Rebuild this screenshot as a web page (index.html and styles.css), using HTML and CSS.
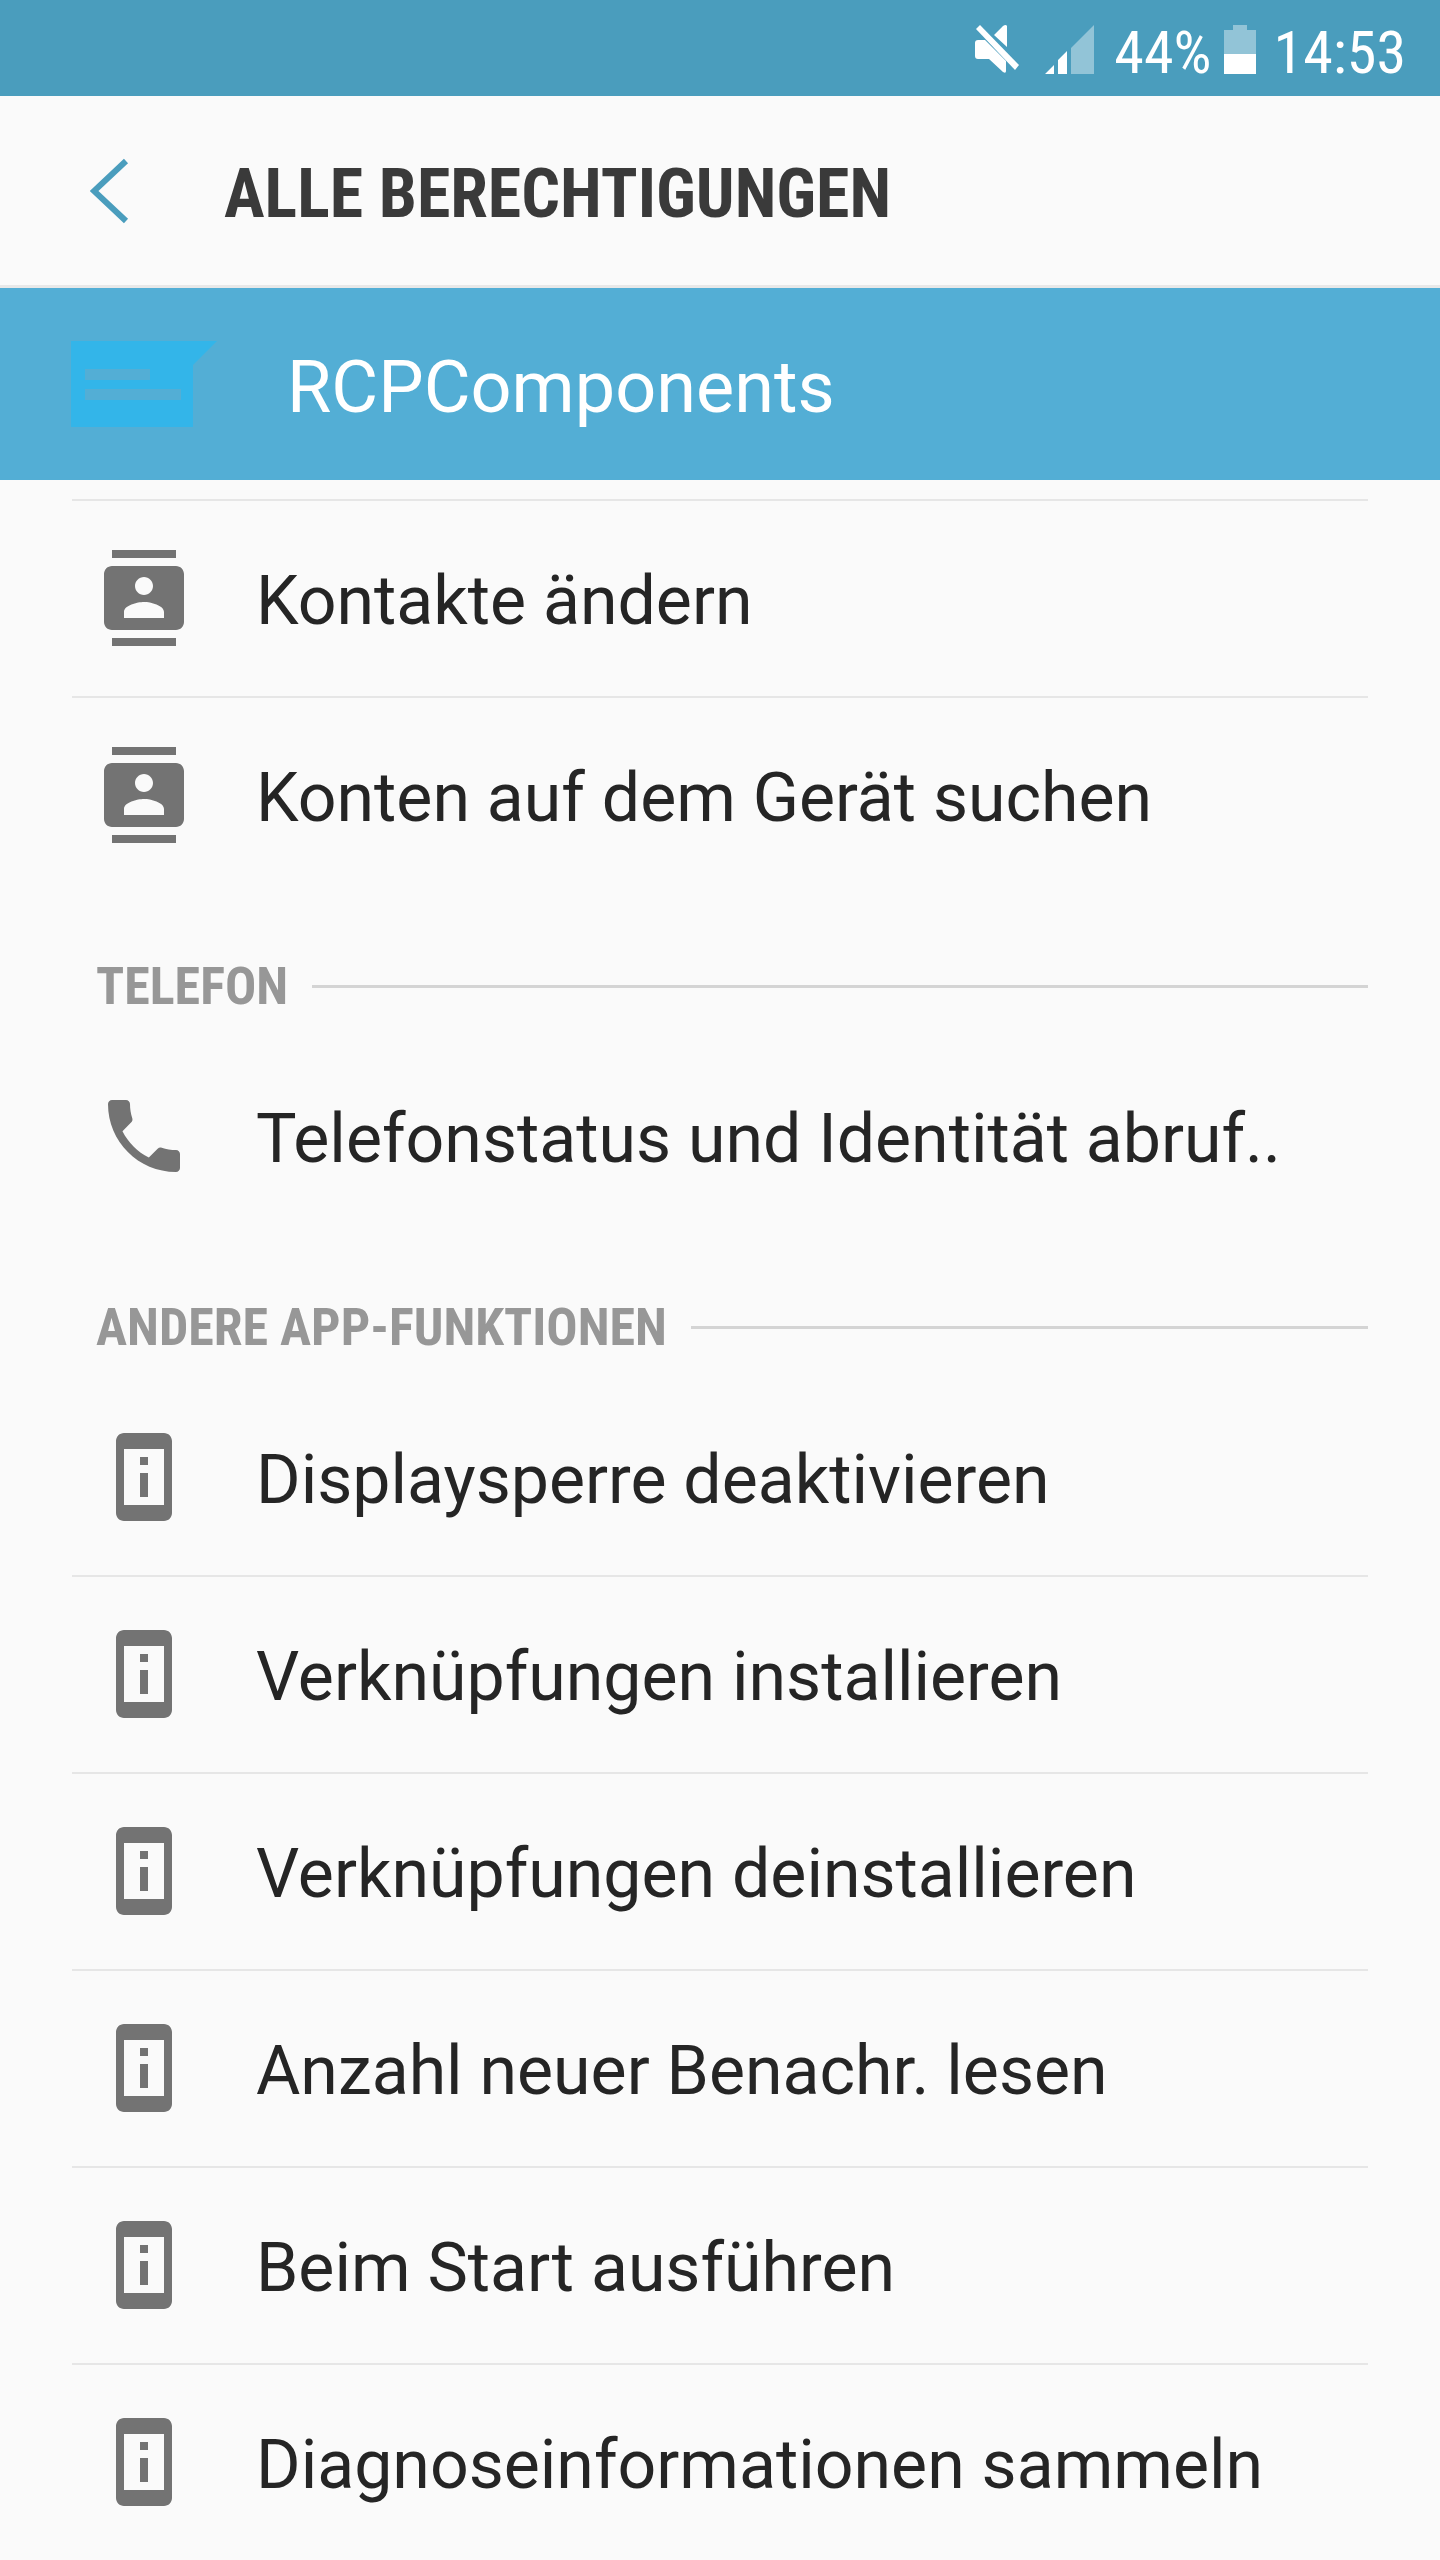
FILE: index.html
```html
<!DOCTYPE html>
<html lang="de">
<head>
  <meta charset="utf-8">
  <meta name="viewport" content="width=device-width">
  <title>Alle Berechtigungen</title>
  <link rel="stylesheet" href="styles.css">
</head>
<body>
  <!-- shared row icons -->
  <svg class="symbols" aria-hidden="true">
    <symbol id="contacts" viewBox="0 0 24 24">
      <path d="M20 0H4v2h16V0zM4 24h16v-2H4v2zM20 4H4c-1.100 0-2 .9-2 2v12c0 1.100.9 2 2 2h16c1.100 0 2-.9 2-2V6c0-1.100-.9-2-2-2zm-8 2.750c1.240 0 2.250 1.010 2.250 2.250s-1.010 2.250-2.250 2.250S9.750 10.240 9.750 9 10.760 6.750 12 6.750zM17 17H7v-1.500c0-1.670 3.330-2.500 5-2.500s5 .83 5 2.500V17z"/>
    </symbol>
    <symbol id="phone" viewBox="0 0 24 24">
      <path d="M6.620 10.790c1.440 2.830 3.760 5.140 6.590 6.590l2.200-2.200c.27-.27.67-.36 1.020-.24 1.120.37 2.330.57 3.570.57.55 0 1 .45 1 1V20c0 .55-.45 1-1 1-9.390 0-17-7.610-17-17 0-.55.45-1 1-1h3.500c.55 0 1 .45 1 1 0 1.250.2 2.450.57 3.570.11.35.03.74-.25 1.020l-2.200 2.200z"/>
    </symbol>
    <symbol id="device" viewBox="0 0 24 24">
      <path d="M13 7h-2v2h2V7zm0 4h-2v6h2v-6zm4-10H7c-1.100 0-2 .9-2 2v18c0 1.100.9 2 2 2h10c1.100 0 2-.9 2-2V3c0-1.100-.9-2-2-2zm0 18H7V5h10v14z"/>
    </symbol>
  </svg>

  <div class="statusbar">
    <svg class="mute" viewBox="0 0 46 50" aria-hidden="true">
      <path d="M1 19q0-3 3-3h7L32 37v10q0 3-3 1L15 35H4q-3 0-3-3zM20 11 29 2q3-2 4 0v21z"/>
      <path d="M2 5 6 1 45 41 41 46z"/>
    </svg>
    <svg class="signal" viewBox="0 0 49 49" aria-hidden="true">
      <path d="M0 49 9 40v9zM13 49V35l9-9v23z"/>
      <path class="dim" d="M26 49V23L49 0v49z"/>
    </svg>
    <span class="level">44%</span>
    <svg class="battery" viewBox="0 0 32 49" aria-hidden="true">
      <path class="dim" d="M9 0h14v5h9v24H0V5h9z"/>
      <path d="M0 29h32v20H0z"/>
    </svg>
    <span>14:53</span>
  </div>

  <header class="header">
    <button class="back" type="button" aria-label="Zurück">
      <svg viewBox="0 0 40 66" aria-hidden="true"><path d="M36 3 4 33 36 63"/></svg>
    </button>
    <h1>ALLE BERECHTIGUNGEN</h1>
  </header>

  <div class="app">
    <svg viewBox="0 0 146 86" aria-hidden="true">
      <path fill-rule="evenodd" d="M0 0h146l-24 24v62H0zM14 28v11h65V28zM14 48v11h96V48z"/>
    </svg>
    <span>RCPComponents</span>
  </div>

  <main class="content">
    <ul class="list first">
      <li><svg><use href="#contacts"/></svg><span>Kontakte ändern</span></li>
      <li><svg><use href="#contacts"/></svg><span>Konten auf dem Gerät suchen</span></li>
    </ul>

    <h2>TELEFON</h2>
    <ul class="list">
      <li><svg><use href="#phone"/></svg><span>Telefonstatus und Identität abruf..</span></li>
    </ul>

    <h2>ANDERE APP-FUNKTIONEN</h2>
    <ul class="list">
      <li><svg><use href="#device"/></svg><span>Displaysperre deaktivieren</span></li>
      <li><svg><use href="#device"/></svg><span>Verknüpfungen installieren</span></li>
      <li><svg><use href="#device"/></svg><span>Verknüpfungen deinstallieren</span></li>
      <li><svg><use href="#device"/></svg><span>Anzahl neuer Benachr. lesen</span></li>
      <li><svg><use href="#device"/></svg><span>Beim Start ausführen</span></li>
      <li><svg><use href="#device"/></svg><span>Diagnoseinformationen sammeln</span></li>
    </ul>
  </main>
</body>
</html>
```
FILE: styles.css
```css
* {
  box-sizing: border-box;
}

body {
  margin: 0;
  background-color: #fafafa;
  color: #252525;
  font-family: Roboto, sans-serif;
  font-size: 68px;
}

.symbols {
  display: none;
}

.statusbar {
  display: flex;
  align-items: center;
  justify-content: flex-end;
  height: 96px;
  padding: 2px 34px 0;
  background-color: #4a9dbd;
  color: #fff;
  fill: #fff;
  font-family: "Roboto Condensed", Roboto, sans-serif;
  font-size: 60px;
}

.statusbar span,
.app span,
.list span,
h1 {
  padding-top: 6px;
}

.statusbar .dim {
  opacity: 0.4;
}

.mute {
  width: 46px;
  height: 50px;
  margin-right: 25px;
}

.signal {
  width: 49px;
  height: 49px;
  margin-right: 20px;
}

.battery {
  width: 32px;
  height: 49px;
  margin: 0 18px 0 12px;
}

.header {
  display: flex;
  align-items: center;
  height: 192px;
  padding-left: 90px;
  border-bottom: 3px solid #e8e8e8;
}

.back {
  display: flex;
  width: 134px;
  padding: 0;
  border: 0;
  background: none;
  cursor: pointer;
}

.back svg {
  width: 40px;
  height: 66px;
  fill: none;
  stroke: #4a9dbd;
  stroke-width: 6;
}

h1 {
  margin: 0;
  color: #3a3a3a;
  font-family: "Roboto Condensed", Roboto, sans-serif;
  font-size: 68px;
}

.app {
  display: flex;
  align-items: center;
  gap: 70px;
  height: 192px;
  padding: 0 71px;
  background-color: #53aed5;
  color: #fff;
  font-size: 72px;
}

.app svg {
  width: 146px;
  height: 86px;
  fill: #33b5e9;
}

.content {
  padding: 19px 72px 0;
}

.list {
  margin: 0;
  padding: 0;
  list-style: none;
}

.list li {
  display: flex;
  align-items: center;
  gap: 64px;
  height: 195px;
  padding: 0 24px 2px;
  white-space: nowrap;
}

.list li + li,
.first li:first-child {
  height: 197px;
  border-top: 2px solid #e6e6e6;
}

.list svg {
  width: 96px;
  height: 96px;
  fill: #737373;
}

h2 {
  display: flex;
  align-items: center;
  gap: 24px;
  height: 146px;
  margin: 0;
  padding: 41px 0 0 24px;
  color: #979797;
  font-family: "Roboto Condensed", Roboto, sans-serif;
  font-size: 52px;
}

h2::after {
  content: "";
  flex: 1;
  height: 3px;
  background-color: #d4d4d4;
}
```
